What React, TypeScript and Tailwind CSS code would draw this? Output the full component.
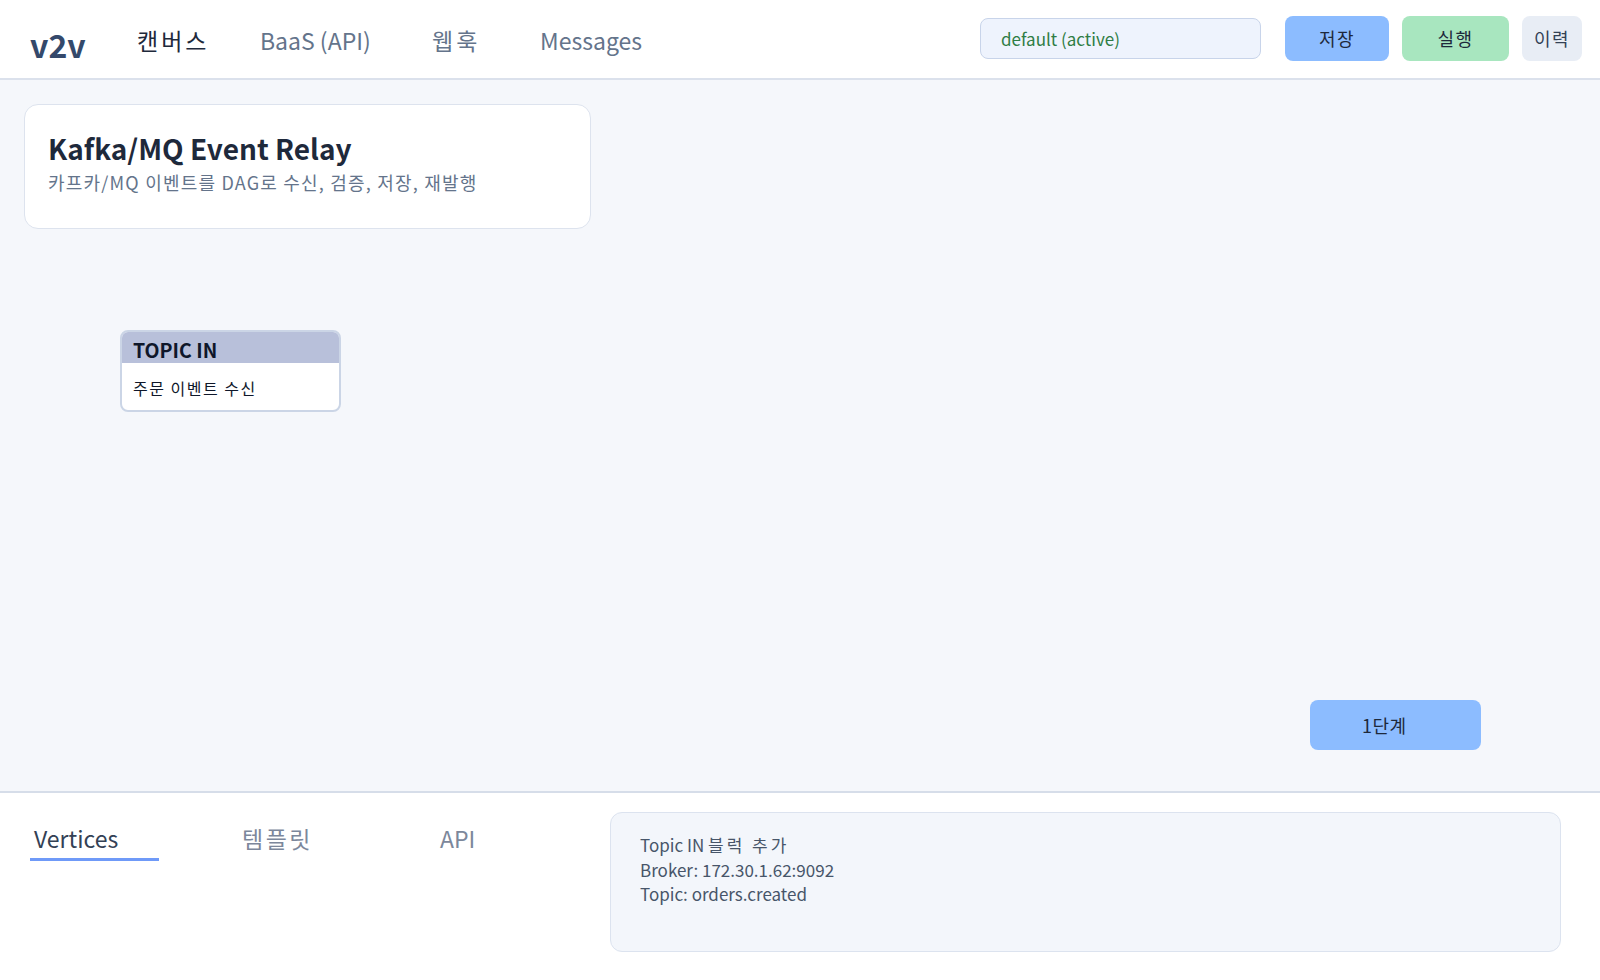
import { useState } from "react";

const navItems = [
  { label: "캔버스", w: "w-[123px]", ko: true },
  { label: "BaaS (API)", w: "w-[172px]", ko: false },
  { label: "웹훅", w: "w-[108px]", ko: true },
  { label: "Messages", w: "", ko: false },
];

const tabs = [
  { label: "Vertices", cls: "w-[129px]", ko: false },
  { label: "템플릿", cls: "ml-[79px] w-[120px]", ko: true },
  { label: "API", cls: "ml-[78px] w-[80px]", ko: false },
];

const App = () => {
  const [activeNav, setActiveNav] = useState("캔버스");
  const [activeTab, setActiveTab] = useState("Vertices");

  return (
    <div
      className="h-screen flex flex-col bg-white text-[#1e293b]"
      style={{ fontFamily: '"Noto Sans CJK KR", "Noto Sans", sans-serif' }}
    >
      <header className="h-[80px] shrink-0 flex items-center border-b-2 border-[#dbe1ec] pl-[30px] pr-[18px]">
        <div className="w-[107px] text-[32px] font-bold text-[#34496b] mt-[9px] leading-none">v2v</div>
        <nav className="flex items-center mt-[3px]">
          {navItems.map((n) => (
            <button
              key={n.label}
              onClick={() => setActiveNav(n.label)}
              className={`${n.w} text-left leading-none ${n.ko ? "text-[23px] tracking-[3px]" : "text-[23px]"} ${
                activeNav === n.label ? "text-[#1e293b]" : "text-[#64748b]"
              }`}
            >
              {n.label}
            </button>
          ))}
        </nav>
        <div className="ml-auto flex items-center mt-[-1px]">
          <div className="w-[281px] h-[41px] rounded-lg border border-[#c8d4ea] bg-[#eef3fd] flex items-center px-[20px] text-[17px] text-[#2f7d45]">
            default (active)
          </div>
          <button className="ml-[24px] w-[104px] h-[45px] rounded-lg bg-[#8cbcff] text-[18px] tracking-[1.5px]">저장</button>
          <button className="ml-[13px] w-[107px] h-[45px] rounded-lg bg-[#a8e6bf] text-[18px] tracking-[1.5px]">실행</button>
          <button className="ml-[13px] w-[60px] h-[45px] rounded-lg bg-[#e8edf5] text-[18px] tracking-[1.5px] text-[#334155]">
            이력
          </button>
        </div>
      </header>

      <main className="flex-1 relative bg-[#f5f7fb] border-b-2 border-[#d6dde9] pt-[24px] pl-[24px]">
        <div className="w-[567px] h-[125px] rounded-[14px] border border-[#dde3ee] bg-white px-[23px] pt-[25px]">
          <h1 className="text-[28px] font-bold text-[#1e293b] leading-[36px]">Kafka/MQ Event Relay</h1>
          <p className="text-[18px] tracking-[1.2px] text-[#64748b] leading-[26px] mt-[3px]">
            카프카/MQ 이벤트를 DAG로 수신, 검증, 저장, 재발행
          </p>
        </div>

        <div className="absolute left-[120px] top-[250px] w-[221px] h-[82px] rounded-lg border-2 border-[#cbd5e6] bg-white overflow-hidden">
          <div className="h-[31px] bg-[#b8c0da] flex items-end px-[11px] pb-[1px]">
            <span className="text-[19.5px] font-bold text-[#0f172a] leading-[24px]">TOPIC IN</span>
          </div>
          <div className="px-[11px] pt-[15px] text-[16px] tracking-[1.5px] text-[#0f172a] leading-[20px]">주문 이벤트 수신</div>
        </div>

        <button className="absolute left-[1310px] top-[620px] w-[171px] h-[50px] rounded-lg bg-[#8cbcff] text-[18px] tracking-[0.5px] text-[#1e293b] text-left pl-[52px]">
          1단계
        </button>
      </main>

      <section className="h-[187px] shrink-0 flex bg-white pt-[19px]">
        <div className="w-[610px] shrink-0 flex items-start pl-[30px] pt-[12px]">
          {tabs.map((t) => (
            <button
              key={t.label}
              onClick={() => setActiveTab(t.label)}
              className={`${t.cls} text-[23px] leading-[28px] text-left pl-[4px] pb-[6px] border-b-[3px] ${t.ko ? "tracking-[2.5px]" : ""} ${
                activeTab === t.label ? "border-[#6f9af8] text-[#334155]" : "border-transparent text-[#7c879b]"
              }`}
            >
              {t.label}
            </button>
          ))}
        </div>
        <div className="w-[951px] h-[140px] rounded-xl border border-[#dce3ef] bg-[#f3f6fb] px-[29px] pt-[20px] text-[17px] leading-[24.5px] text-[#475569]">
          <div>
            Topic IN <span className="tracking-[3px]">블럭 추가</span>
          </div>
          <div>Broker: 172.30.1.62:9092</div>
          <div>Topic: orders.created</div>
        </div>
      </section>
    </div>
  );
};

export default App;
